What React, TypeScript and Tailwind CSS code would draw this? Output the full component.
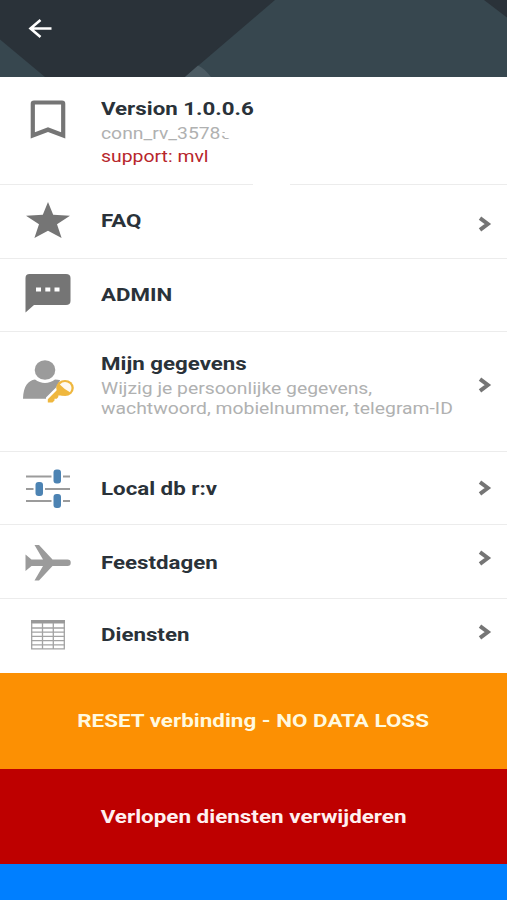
import { ReactNode } from "react";

const title =
  "block w-max origin-left scale-x-[1.173] whitespace-nowrap text-[19px] leading-6 font-bold text-[#2a3239]";
const subtitle =
  "block w-max origin-left scale-x-[1.137] whitespace-nowrap text-[17px] leading-[19.5px] text-[#b0b1b1]";

function BookmarkIcon() {
  return (
    <svg width="36" height="40" viewBox="0 0 36 40">
      <path
        d="M4 0.500H32Q35.300 0.500 35.300 3.800V38.500L18 32L0.700 38.500V3.800Q0.700 0.500 4 0.500ZM4.900 4.600V32.300L18 27.300L31.100 32.300V4.600Z"
        fill="#757575"
        fillRule="evenodd"
      />
    </svg>
  );
}

function StarIcon() {
  return (
    <svg width="44" height="36" viewBox="0 0 44 36">
      <path
        d="M22 0L27.200 12.700L44 13.800L31 22.300L35.600 36L22 28.700L8.400 36L13 22.300L0 13.800L16.800 12.700Z"
        fill="#757575"
      />
    </svg>
  );
}

function ChatIcon() {
  return (
    <svg width="46" height="40" viewBox="0 0 46 40">
      <path
        d="M4.500 0H41Q45.500 0 45.500 4V27Q45.500 31 41 31H9L0.500 38.500V4Q0.500 0 4.500 0Z"
        fill="#757575"
      />
      <path d="M11 13.500h5v4h-5zM20.300 13.500h5v4h-5zM29.500 13.500h5v4h-5z" fill="#fff" />
    </svg>
  );
}

function UserKeyIcon() {
  return (
    <svg width="52" height="46" viewBox="0 0 52 46">
      <g fill="#9b9b9b">
        <ellipse cx="22" cy="11" rx="10.300" ry="9.800" />
        <path d="M0 39.800C0.500 27 5 21.500 12 20.500C18 25 26 25 32 20.500C36 20.500 39 21 41 24L28 39.800Z" />
      </g>
      <path
        d="M34 29L24 39V45H31L36 40L42 37L46 24L38 22Z"
        fill="#fff"
        stroke="#fff"
        strokeWidth="2"
      />
      <path d="M35 30L24.800 40.200V43.500H29.500L31.500 41.500V39.800H33.800L35.300 38V36.500L41 36.500Z" fill="#efb73e" />
      <ellipse cx="42" cy="29" rx="8.800" ry="8" fill="#efb73e" />
      <path d="M36.800 25.500Q41.500 21 47 25Q50 29 47 33.300Q42 31 36.800 25.500Z" fill="#fffaf0" />
    </svg>
  );
}

function SlidersIcon() {
  return (
    <svg width="44" height="40" viewBox="0 0 44 40">
      <path
        d="M0 7.500H25.500M37 7.500H44M0 20H7.500M19 20H44M0 32H25.500M37 32H44"
        stroke="#9b9b9b"
        strokeWidth="2"
      />
      <g fill="#4c83b3">
        <rect x="27.500" y="0.500" width="7.500" height="14" rx="3" />
        <rect x="9.500" y="13" width="7.500" height="14" rx="3" />
        <rect x="27.500" y="25" width="7.500" height="14" rx="3" />
      </g>
    </svg>
  );
}

function PlaneIcon() {
  return (
    <svg width="46" height="36" viewBox="0 0 46 36">
      <path
        d="M0.500 9.500L6.500 14.500H18L9.500 0H14L27.500 14.500H42.500A3.200 3.200 0 0 1 42.500 21H27.500L14 35.500H9.500L18 21H6.500L0.500 26Z"
        fill="#9b9b9b"
      />
    </svg>
  );
}

function TableIcon() {
  return (
    <svg width="34" height="30" viewBox="0 0 34 30">
      <path d="M0 0H34V3.500H0Z" fill="#999" />
      <path
        d="M0.700 3V28.800H33.300V3M11.500 3V29M22.300 3V29M0 8H34M0 12.200H34M0 16.400H34M0 20.600H34M0 24.800H34"
        fill="none"
        stroke="#a3a3a3"
        strokeWidth="1.300"
      />
    </svg>
  );
}

function Chevron() {
  return (
    <svg width="15" height="16" viewBox="0 0 15 16">
      <path d="M3 2.200L10.800 8L3 13.800" fill="none" stroke="#757575" strokeWidth="4" />
    </svg>
  );
}

type RowProps = {
  className: string;
  icon: ReactNode;
  iconClass: string;
  textClass: string;
  chevronClass?: string;
  children: ReactNode;
};

function Row({ className, icon, iconClass, textClass, chevronClass, children }: RowProps) {
  return (
    <li className={`flex items-start ${className}`}>
      <div className={`flex w-[101px] shrink-0 ${iconClass}`}>{icon}</div>
      <div className={`min-w-0 flex-1 ${textClass}`}>{children}</div>
      {chevronClass && (
        <div className={`w-[30px] shrink-0 ${chevronClass}`}>
          <Chevron />
        </div>
      )}
    </li>
  );
}

export default function App() {
  return (
    <main className="flex h-[900px] w-[507px] flex-col overflow-hidden bg-white font-['Roboto',sans-serif]">
      <header className="relative h-[77px] shrink-0 bg-[#2a3239]">
        <svg className="absolute inset-0" width="507" height="77" viewBox="0 0 507 77">
          <path d="M0 39.500L45 77H0Z" fill="#37474f" />
          <path d="M275 0H507V77H185Z" fill="#37474f" />
          <path d="M484 0H507V17.500Z" fill="#2a3239" />
          <path d="M185 77L198 65.500Q204 68 211 77Z" fill="#4c5b63" />
        </svg>
        <button aria-label="Back" className="relative block pt-[18px] pl-[28px]">
          <svg width="24" height="21" viewBox="0 0 24 21">
            <path
              d="M23.500 10.500H2.500M12.500 2L2.500 10.500L12.500 19"
              fill="none"
              stroke="#fff"
              strokeWidth="2.600"
            />
          </svg>
        </button>
      </header>

      <ul className="shrink-0">
        <Row
          className="h-[107px]"
          icon={<BookmarkIcon />}
          iconClass="pt-[23px] pl-[30px]"
          textClass="pt-[20px]"
        >
          <strong className={title}>Version 1.0.0.6</strong>
          <span className={`relative mt-[3px] ${subtitle}`}>
            conn_rv_35785
            <span className="absolute top-0 right-0 h-[14px] w-[6px] bg-white" />
            <span className="absolute top-0 right-0 h-[8px] w-[10px] bg-white" />
          </span>
          <span className="mt-px block w-max origin-left scale-x-[1.14] text-[17px] leading-[22px] text-[#b7252b]">
            support: mvl
          </span>
        </Row>
        <li className="flex h-px justify-between">
          <span className="w-[253px] bg-[#ececec]" />
          <span className="w-[217px] bg-[#ececec]" />
        </li>
        <Row
          className="h-[74px] border-b border-[#ececec]"
          icon={<StarIcon />}
          iconClass="pt-[17px] pl-[26px]"
          textClass="pt-[24px]"
          chevronClass="pt-[31px]"
        >
          <strong className={title}>FAQ</strong>
        </Row>
        <Row
          className="h-[73px] border-b border-[#ececec]"
          icon={<ChatIcon />}
          iconClass="pt-[15px] pl-[25px]"
          textClass="pt-[24px]"
        >
          <strong className={title}>ADMIN</strong>
        </Row>
        <Row
          className="h-[120px] border-b border-[#ececec]"
          icon={<UserKeyIcon />}
          iconClass="pt-[27px] pl-[23px]"
          textClass="pt-[20px]"
          chevronClass="pt-[45px]"
        >
          <strong className={title}>Mijn gegevens</strong>
          <span className={`mt-[3px] ${subtitle}`}>
            Wijzig je persoonlijke gegevens,
            <br />
            wachtwoord, mobielnummer, telegram-ID
          </span>
        </Row>
        <Row
          className="h-[73px] border-b border-[#ececec]"
          icon={<SlidersIcon />}
          iconClass="pt-[17px] pl-[26px]"
          textClass="pt-[25px]"
          chevronClass="pt-[28px]"
        >
          <strong className={title}>Local db r:v</strong>
        </Row>
        <Row
          className="h-[74px] border-b border-[#ececec]"
          icon={<PlaneIcon />}
          iconClass="pt-[20px] pl-[25px]"
          textClass="pt-[26px]"
          chevronClass="pt-[25px]"
        >
          <strong className={title}>Feestdagen</strong>
        </Row>
        <Row
          className="h-[74px]"
          icon={<TableIcon />}
          iconClass="pt-[21px] pl-[31px]"
          textClass="pt-[24px]"
          chevronClass="pt-[25px]"
        >
          <strong className={title}>Diensten</strong>
        </Row>
      </ul>

      <button className="flex h-[96px] shrink-0 items-center justify-center bg-[#fc9003] text-[19px] font-bold text-[#fff9df]">
        <span className="scale-x-[1.18] whitespace-nowrap">RESET verbinding - NO DATA LOSS</span>
      </button>
      <button className="flex h-[95px] shrink-0 items-center justify-center bg-[#be0000] pt-px text-[19px] font-bold text-[#fff0f0]">
        <span className="scale-x-[1.18] whitespace-nowrap">Verlopen diensten verwijderen</span>
      </button>
      <div className="flex-1 bg-[#007fff]" />
    </main>
  );
}
